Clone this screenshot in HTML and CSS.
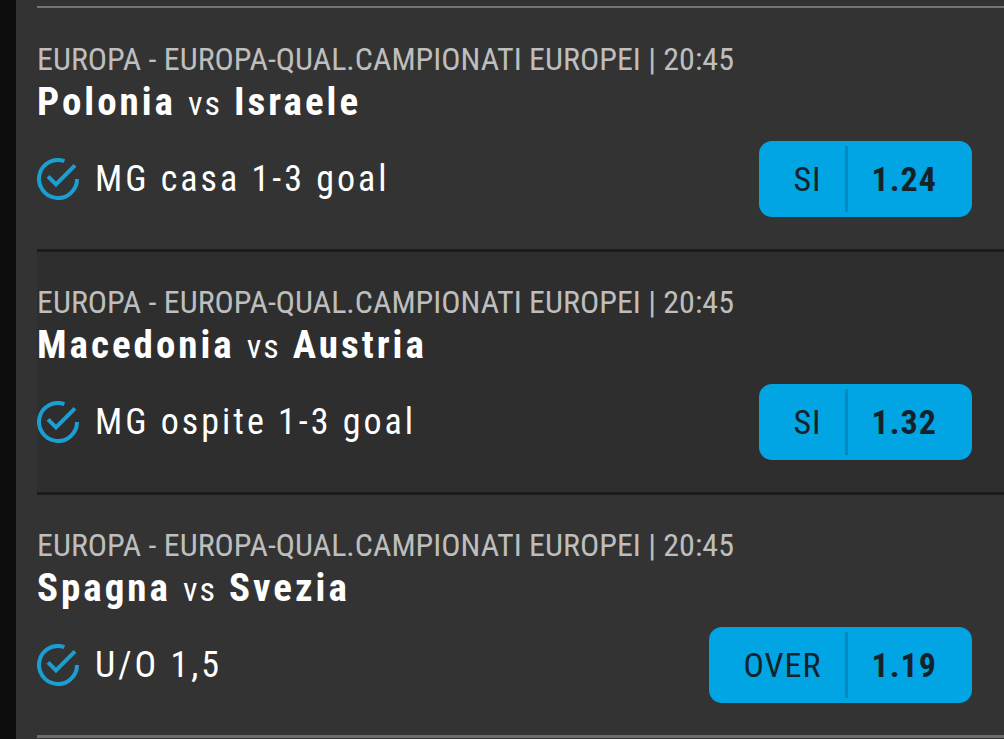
FILE: index.html
```html
<!DOCTYPE html>
<html lang="it">
<head>
<meta charset="utf-8">
<meta name="viewport" content="width=device-width, initial-scale=1">
<title>Schedina</title>
<link rel="stylesheet" href="styles.css">
</head>
<body>
<svg class="sprite" aria-hidden="true">
  <symbol id="check" viewBox="0 0 42 42">
    <path d="M27.4 3.1A19 19 0 1 0 40 21" fill="none" stroke="currentColor" stroke-width="4"/>
    <path d="M11 18.4L19 26.4L38 7.4" fill="none" stroke="currentColor" stroke-width="4"/>
  </symbol>
</svg>
<main class="slip">
  <ul class="events">
    <li class="event">
      <p class="league">EUROPA - EUROPA-QUAL.CAMPIONATI EUROPEI | 20:45</p>
      <h2 class="teams">Polonia <span class="versus">vs</span> Israele</h2>
      <div class="bet">
        <svg class="icon" aria-hidden="true"><use href="#check"/></svg>
        <span class="market">MG casa 1-3 goal</span>
        <button class="odds" type="button"><span class="pick">SI</span><span class="price">1.24</span></button>
      </div>
    </li>
    <li class="event event-alt">
      <p class="league">EUROPA - EUROPA-QUAL.CAMPIONATI EUROPEI | 20:45</p>
      <h2 class="teams">Macedonia <span class="versus">vs</span> Austria</h2>
      <div class="bet">
        <svg class="icon" aria-hidden="true"><use href="#check"/></svg>
        <span class="market">MG ospite 1-3 goal</span>
        <button class="odds" type="button"><span class="pick">SI</span><span class="price">1.32</span></button>
      </div>
    </li>
    <li class="event">
      <p class="league">EUROPA - EUROPA-QUAL.CAMPIONATI EUROPEI | 20:45</p>
      <h2 class="teams">Spagna <span class="versus">vs</span> Svezia</h2>
      <div class="bet">
        <svg class="icon" aria-hidden="true"><use href="#check"/></svg>
        <span class="market">U/O 1,5</span>
        <button class="odds" type="button"><span class="pick">OVER</span><span class="price">1.19</span></button>
      </div>
    </li>
  </ul>
</main>
</body>
</html>
```

FILE: styles.css
```css
* {
  box-sizing: border-box;
}

body {
  margin: 0;
  background: #333;
  color: #fff;
  font-family: "Roboto Condensed", Roboto, sans-serif;
}

.sprite {
  display: none;
}

.slip {
  min-height: 100vh;
  padding: 6px 0 0 21px;
  border-left: 16px solid #0d0d0d;
}

.events {
  margin: 0;
  padding: 1px 0 0;
  border-top: 2px solid #747474;
  list-style: none;
}

.event {
  padding: 32px 32px 32px 0;
  border-bottom: 3px solid #1c1c1c;
}

.event:last-child {
  border-bottom-color: #6c6c6c;
}

.event-alt {
  background: #2e2e2e;
}

.league {
  margin: 0;
  color: #bebebe;
  font-size: 32px;
  line-height: 36px;
}

.teams {
  margin: 0 0 14px;
  font-size: 39px;
  font-weight: 700;
  line-height: 50px;
  letter-spacing: 3px;
}

.versus {
  font-size: 34px;
  font-weight: 400;
  line-height: 1;
  letter-spacing: 2px;
}

.bet {
  display: flex;
  align-items: center;
  gap: 16px;
}

.icon {
  flex: none;
  width: 42px;
  height: 42px;
  color: #1b9fd3;
}

.market {
  flex: 1;
  font-size: 36px;
  letter-spacing: 3px;
}

.odds {
  display: flex;
  align-items: center;
  height: 76px;
  padding: 5px 35px 5px 34px;
  border: 0;
  border-radius: 13px;
  background: #02a5e4;
  color: #14232b;
  font: inherit;
  font-size: 34px;
  letter-spacing: 1px;
  cursor: pointer;
}

.pick,
.price {
  display: flex;
  align-items: center;
  height: 100%;
}

.pick {
  padding-right: 23px;
  border-right: 3px solid #048abd;
}

.price {
  padding-left: 24px;
  font-weight: 700;
}
```
